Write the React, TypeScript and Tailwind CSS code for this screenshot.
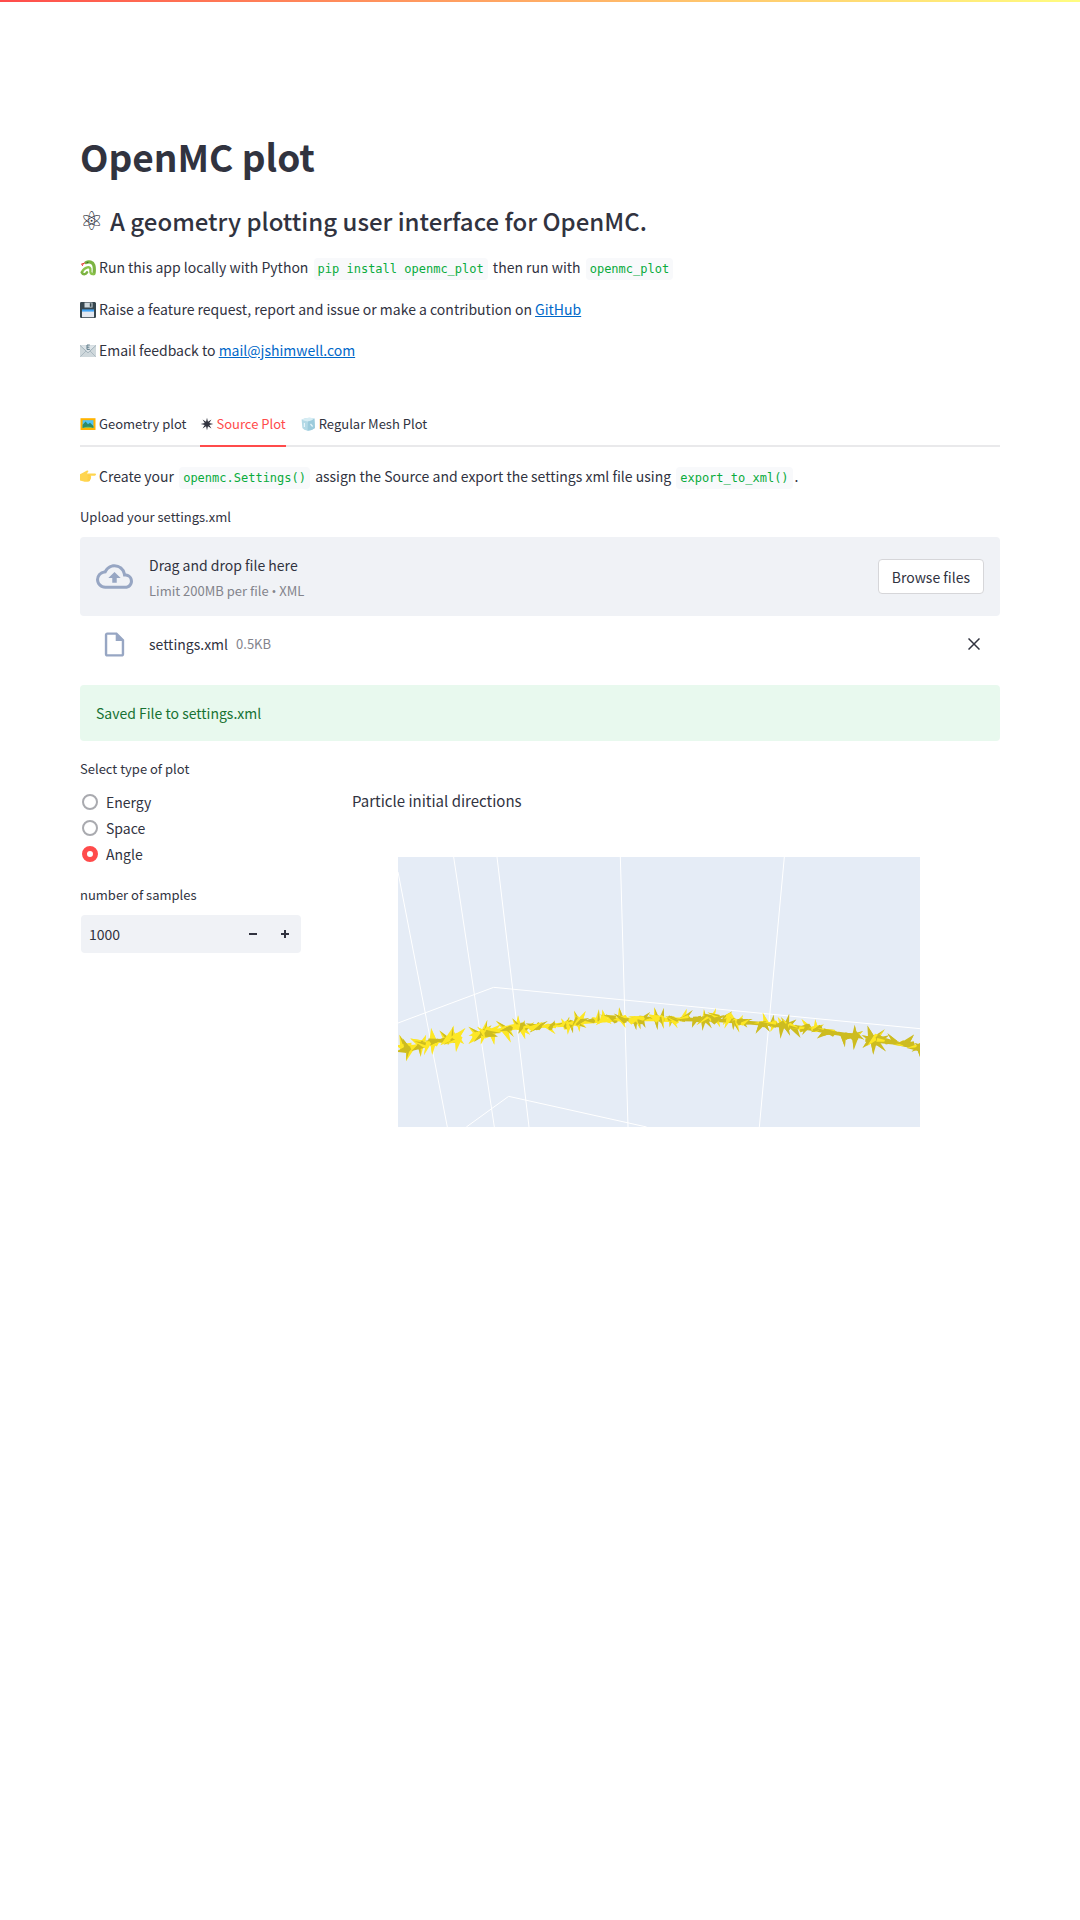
import { useRef, useState, type ReactNode } from "react";
import { MdOutlineCloudUpload, MdOutlineInsertDriveFile } from "react-icons/md";

const YELLOW = "#fde725";
const SHADE = "#cdbc20";

type Cone = [tipX: number, tipY: number, baseX: number, baseY: number, half: number, dark?: number];

const leftCones: Cone[] = [
  [60, 590, 72, 625, 9], [54, 618, 90, 626, 14], [54, 634, 84, 628, 9, 1], [80, 658, 92, 620, 10],
  [96, 598, 124, 612, 9], [70, 600, 84, 632, 8, 1], [122, 644, 122, 612, 8], [136, 590, 124, 618, 8],
  [100, 630, 132, 612, 9, 1], [108, 606, 142, 618, 8], [154, 570, 160, 610, 10], [157, 638, 160, 602, 8],
  [140, 604, 172, 608, 9], [184, 598, 148, 606, 8, 1], [134, 640, 146, 608, 6], [182, 576, 202, 602, 8],
  [168, 602, 206, 602, 9, 1], [220, 562, 204, 600, 8], [218, 566, 222, 604, 7, 1], [252, 568, 220, 600, 10],
  [229, 630, 236, 590, 9], [196, 612, 226, 598, 7], [248, 608, 224, 586, 8], [186, 612, 206, 596, 7],
  [270, 564, 296, 586, 8], [270, 608, 296, 584, 9], [272, 586, 310, 582, 9], [320, 546, 308, 586, 8],
  [286, 602, 318, 574, 7, 1], [304, 608, 314, 574, 8], [330, 560, 306, 582, 8, 1], [342, 608, 336, 572, 9],
  [358, 556, 326, 580, 8], [358, 578, 318, 570, 9], [296, 564, 322, 588, 8], [348, 588, 318, 580, 8, 1],
  [352, 546, 380, 570, 7], [390, 602, 372, 564, 9], [404, 554, 374, 568, 7], [398, 586, 380, 562, 6],
  [364, 572, 394, 564, 6, 1], [414, 532, 414, 566, 8], [400, 540, 414, 562, 7], [392, 556, 426, 562, 7],
  [434, 592, 424, 560, 8], [432, 546, 422, 564, 6], [446, 580, 420, 558, 8], [418, 576, 430, 552, 7, 1],
  [458, 550, 434, 566, 6], [436, 562, 472, 562, 7], [442, 552, 480, 562, 7, 1], [498, 546, 466, 564, 6, 1],
  [454, 574, 480, 554, 7, 1], [484, 548, 452, 566, 6], [500, 560, 526, 556, 7], [522, 578, 500, 556, 6],
  [522, 546, 510, 566, 5, 1], [530, 554, 558, 554, 7], [536, 560, 566, 550, 8], [546, 540, 560, 564, 7],
  [566, 536, 558, 562, 6, 1], [564, 578, 568, 546, 7], [578, 574, 572, 544, 6, 1], [584, 518, 596, 552, 8],
  [614, 518, 596, 548, 8], [598, 570, 596, 540, 7], [614, 560, 590, 544, 8], [562, 550, 596, 550, 8],
  [622, 536, 588, 548, 7, 1], [576, 562, 594, 534, 6], [620, 542, 642, 542, 6, 1], [640, 534, 660, 544, 6],
  [656, 514, 652, 544, 6], [668, 514, 674, 542, 7], [652, 552, 674, 534, 6], [664, 526, 706, 536, 7],
  [690, 548, 666, 532, 7], [682, 526, 708, 544, 6, 1], [718, 508, 722, 540, 8], [734, 558, 722, 532, 7],
  [704, 540, 738, 534, 7], [706, 524, 736, 544, 6, 1], [732, 538, 766, 542, 8, 1], [768, 564, 764, 534, 7, 1],
  [780, 562, 772, 534, 7, 1], [784, 530, 750, 544, 8], [806, 520, 778, 546, 7, 1], [794, 558, 782, 532, 7, 1],
  [812, 532, 778, 536, 7, 1], [750, 530, 790, 536, 5], [812, 536, 832, 536, 5],
];

const rightCones: Cone[] = [
  [14, 508, 20, 540, 7], [22, 564, 18, 528, 7, 1], [40, 510, 34, 544, 7, 1], [40, 560, 34, 530, 6],
  [0, 526, 24, 538, 9], [46, 544, 74, 538, 7], [60, 556, 64, 532, 6, 1], [80, 560, 64, 534, 6],
  [90, 540, 56, 534, 6, 1], [50, 530, 82, 546, 5], [108, 512, 98, 540, 7], [124, 514, 98, 540, 6, 1],
  [84, 538, 116, 534, 7, 1], [128, 558, 138, 534, 7, 1], [118, 540, 152, 538, 8, 1], [162, 514, 164, 546, 7],
  [158, 566, 162, 532, 7, 1], [182, 560, 164, 534, 6, 1], [144, 552, 172, 528, 6], [196, 510, 184, 540, 6],
  [166, 524, 194, 534, 6, 1], [178, 520, 206, 532, 6], [208, 556, 198, 532, 6], [218, 528, 188, 544, 8, 1],
  [242, 518, 222, 536, 6, 1], [222, 550, 238, 528, 7], [258, 544, 238, 524, 6], [210, 544, 242, 540, 7, 1],
  [226, 560, 238, 534, 6], [250, 564, 252, 538, 6, 1], [266, 572, 254, 540, 6], [276, 530, 262, 552, 6],
  [302, 538, 264, 546, 7, 1], [308, 550, 272, 546, 7, 1], [288, 558, 272, 540, 6, 1], [294, 540, 276, 552, 4],
  [316, 550, 344, 552, 8, 1], [320, 576, 336, 550, 7, 1], [340, 524, 350, 554, 7], [356, 570, 342, 548, 6, 1],
  [370, 530, 366, 558, 7, 1], [364, 570, 376, 546, 7], [344, 548, 378, 554, 7, 1], [386, 536, 398, 560, 7],
  [392, 590, 396, 552, 8, 1], [416, 528, 408, 560, 7, 1], [418, 582, 404, 550, 7, 1], [370, 560, 402, 552, 8, 1],
  [396, 536, 416, 566, 7, 1], [434, 542, 406, 562, 8, 1], [448, 588, 430, 560, 8, 1], [450, 566, 418, 556, 6],
  [458, 542, 474, 562, 6], [446, 562, 478, 560, 7, 1], [484, 564, 450, 568, 7], [460, 580, 474, 556, 6, 1],
  [496, 544, 498, 572, 7], [516, 556, 488, 568, 7], [488, 574, 512, 562, 6, 1], [506, 592, 528, 576, 7, 1],
  [508, 566, 552, 580, 8, 1], [564, 578, 522, 576, 8, 1], [566, 582, 592, 590, 8, 1], [584, 616, 580, 584, 7, 1],
  [590, 580, 620, 592, 7, 1], [614, 560, 614, 598, 8, 1], [634, 576, 606, 592, 8, 1], [612, 624, 616, 588, 8, 1],
  [592, 596, 618, 584, 7, 1], [638, 596, 614, 580, 6, 1], [654, 562, 666, 600, 9, 1], [670, 638, 672, 592, 10, 1],
  [700, 572, 670, 602, 8, 1], [640, 588, 676, 602, 8, 1], [642, 620, 668, 596, 8, 1], [712, 588, 674, 606, 9, 1],
  [704, 630, 676, 602, 7, 1], [656, 614, 682, 588, 7], [720, 604, 682, 594, 9, 1], [716, 584, 736, 608, 6, 1],
  [750, 608, 708, 604, 7, 1], [738, 614, 762, 610, 7], [788, 588, 764, 614, 9, 1], [752, 612, 790, 616, 9, 1],
  [776, 624, 812, 622, 10, 1], [790, 632, 816, 616, 7, 1], [812, 652, 808, 620, 7, 1], [798, 612, 826, 628, 8, 1],
];

function Cones({ items }: { items: Cone[] }) {
  return (
    <>
      {items.map(([tx, ty, bx, by, half, dark], i) => {
        const len = Math.hypot(bx - tx, by - ty) || 1;
        const ux = (bx - tx) / len;
        const uy = (by - ty) / len;
        const h = half * 1.3;
        const a = `${bx - uy * h},${by + ux * h}`;
        const b = `${bx + uy * h},${by - ux * h}`;
        const tip = `${tx - ux * 6},${ty - uy * 6}`;
        const back = `${bx + ux * 5},${by + uy * 5}`;
        const main = dark ? SHADE : YELLOW;
        const side = dark ? (i % 6 ? SHADE : YELLOW) : i % 3 ? YELLOW : SHADE;
        return (
          <g key={i}>
            <polygon points={`${tip} ${a} ${back} ${b}`} fill={main} />
            <polygon points={`${tip} ${bx},${by} ${b}`} fill={side} />
          </g>
        );
      })}
    </>
  );
}

function DirectionsPlot() {
  return (
    <svg
      viewBox="54 51 1566 810"
      preserveAspectRatio="xMidYMid slice"
      className="h-[270px] w-full bg-[#e5ecf6]"
      role="img"
      aria-label="Particle initial directions"
    >
      <g fill="none" stroke="#ffffff" strokeWidth="3" strokeLinejoin="round">
        <path d="M54 96L202 861M221 51L343 861M351 51L447 861M721 51L744 861M1213 51L1138 861" />
        <path d="M54 549L341 442L1620 566M259 861L386 769L800 861" />
      </g>
      <g fill="none" strokeWidth="11">
        <path stroke={YELLOW} d="M60 624L100 620L160 606L240 594M276 586L350 572L430 560L500 558L600 547L720 538L820 538L900 538" />
        <path stroke={SHADE} d="M900 538L1000 540L1080 546L1180 554L1290 566L1370 580L1440 590M1456 600L1540 608L1620 624" />
      </g>
      <Cones items={leftCones} />
      <g transform="translate(810 0)">
        <Cones items={rightCones} />
      </g>
    </svg>
  );
}

function Code({ children }: { children: ReactNode }) {
  return (
    <code className="mx-0.5 rounded bg-[#f8f9fb] px-1 py-1 font-['DejaVu_Sans_Mono',monospace] text-xs text-[#09ab3b]">
      {children}
    </code>
  );
}

const glyph = "mr-[3px] inline-block size-4 shrink-0 align-[-3px]";

function SnakeIcon() {
  return (
    <svg viewBox="0 0 16 16" className={glyph} aria-hidden="true" fill="none" strokeLinecap="round">
      <path d="M6 2.600C9 1 12.800 2 13.800 5.200C14.600 8 14.400 11 14 13.600" stroke="#7cb342" strokeWidth="3.200" />
      <path d="M13.600 14C11 14.600 10 12.600 10.400 10.200C10.800 7.600 9.200 7 7.400 7.400C5.400 8 3 9.600 2 12" stroke="#8bc34a" strokeWidth="2.400" />
      <path d="M1.800 12.500C3 15 5.600 14.800 7 12.400" stroke="#7cb342" strokeWidth="2.600" />
      <path d="M4.800 3L1.400 4.200M3.400 3.400L2.400 5.600" stroke="#e53935" strokeWidth="1" />
      <path d="M7 2.400H8" stroke="#33691e" strokeWidth="1" />
    </svg>
  );
}

function FloppyIcon() {
  return (
    <svg viewBox="0 0 16 16" className={glyph} aria-hidden="true">
      <path d="M1.200 0H15L16 1V14.800Q16 16 14.800 16H1.200Q0 16 0 14.800V1.200Q0 0 1.200 0Z" fill="#37474f" />
      <path d="M4.500 0.600H12.500V5.500H4.500Z" fill="#cfd8dc" />
      <path d="M9.800 1.200H11.500V4.800H9.800Z" fill="#37474f" />
      <path d="M2 8H14V15.200H2Z" fill="#e3e8f0" />
      <path d="M2 7.400H14V9.600H2Z" fill="#42a5f5" />
    </svg>
  );
}

function MailIcon() {
  return (
    <svg viewBox="0 0 16 16" className={glyph} aria-hidden="true">
      <path d="M0 2H16V14H0Z" fill="#cfd8dc" />
      <path d="M0.400 13.600L6 8M15.600 13.600L10 8" stroke="#a3b3bb" strokeWidth="0.800" fill="none" />
      <path d="M0 2.400L8 9.800L16 2.400" stroke="#a3b3bb" strokeWidth="1" fill="#dde4e8" />
      <path d="M9.800 2H7V6.400H9.800M7 4.200H9.400" stroke="#607d8b" strokeWidth="1" fill="none" />
    </svg>
  );
}

function PointIcon() {
  return (
    <svg viewBox="0 0 16 16" className={glyph} aria-hidden="true">
      <path
        d="M0 5.200L3.400 3.600L7 1.400Q8.800 1.200 8.200 2.800L6.800 4.400H15Q16.200 4.600 16 5.600Q15.800 6.600 14.800 6.700H10.600Q11.600 7.600 10.800 8.800Q11.200 10 10.200 10.800Q10.200 12 9 12.400Q5.600 13.200 3 12.200L0 11.400Z"
        fill="#ffd54f"
      />
      <path d="M10.400 6.800H7.600M10.600 8.900H7.800M10 10.900H7.600" stroke="#fbc02d" strokeWidth="0.500" />
    </svg>
  );
}

function PictureIcon() {
  return (
    <svg viewBox="0 0 16 16" className={glyph} aria-hidden="true">
      <path d="M0.500 2.200H15.500V14H0.500Z" fill="#ffb300" />
      <path d="M2.600 4.200H13.400V12H2.600Z" fill="#4fc3f7" />
      <path d="M2.600 12V8.800L5.600 5.600L8 8.200L10 6.800L13.400 10V12Z" fill="#2e8b6b" />
      <path d="M2.600 12Q8 9.600 13.400 12Z" fill="#8bc34a" />
    </svg>
  );
}

function StarIcon() {
  return (
    <svg viewBox="0 0 16 16" className="mr-0.5 size-[14px] shrink-0" aria-hidden="true">
      <path
        d="M8 0.800L9.100 5.400L13.100 2.900L10.600 6.900L15.200 8L10.600 9.100L13.100 13.100L9.100 10.600L8 15.200L6.900 10.600L2.900 13.100L5.400 9.100L0.800 8L5.400 6.900L2.900 2.900L6.900 5.400Z"
        fill="#31333f"
      />
    </svg>
  );
}

function IceIcon() {
  return (
    <svg viewBox="0 0 16 16" className={glyph} aria-hidden="true">
      <path d="M1.600 3.400Q8 0.800 14.400 2.600L15 12Q12 14.600 7.600 14.800Q3.600 14 2.400 12Z" fill="#b3d9e6" />
      <path d="M1.600 3.400Q8 0.800 14.400 2.600Q12 5 8 5.400Q4 5 1.600 3.400Z" fill="#d7edf4" />
      <path d="M8 5.400Q12 5 14.400 2.600L15 12Q12 14.600 7.600 14.800Z" fill="#9ccbdc" />
      <path d="M4.400 7V11M10.500 8L12.600 10.500" stroke="#e6f5fa" strokeWidth="1.200" />
    </svg>
  );
}

const tabs = [
  { icon: <PictureIcon />, label: "Geometry plot" },
  { icon: <StarIcon />, label: "Source Plot" },
  { icon: <IceIcon />, label: "Regular Mesh Plot" },
];

export default function App() {
  const [tab, setTab] = useState("Source Plot");
  const [kind, setKind] = useState("Angle");
  const [samples, setSamples] = useState(1000);
  const fileInput = useRef<HTMLInputElement>(null);

  return (
    <div className="min-h-screen bg-white font-['Noto_Sans_CJK_SC',sans-serif] text-[14px] leading-6 text-[#31333f]">
      <div className="h-0.5 bg-linear-to-r from-[#ff4b4b] to-[#fffd80]" />
      <main className="px-20 pt-32">
        <h1 className="text-[37px] leading-[52px] font-bold">OpenMC plot</h1>
        <h3 className="mt-[23px] flex text-2xl leading-8 font-medium">
          <span className="w-[30px] font-['DejaVu_Sans',sans-serif] text-[26px] font-normal">⚛</span>
          A geometry plotting user interface for OpenMC.
        </h3>
        <p className="mt-[18px]">
          <SnakeIcon />
          Run this app locally with Python <Code>pip install openmc_plot</Code> then run with{" "}
          <Code>openmc_plot</Code>
        </p>
        <p className="mt-[18px]">
          <FloppyIcon />
          Raise a feature request, report and issue or make a contribution on{" "}
          <a href="#github" className="text-[#0068c9] underline">GitHub</a>
        </p>
        <p className="mt-[17px]">
          <MailIcon />
          Email feedback to{" "}
          <a href="mailto:mail@jshimwell.com" className="text-[#0068c9] underline">mail@jshimwell.com</a>
        </p>

        <div role="tablist" className="mt-[41px] flex h-[44px] gap-3.5 border-b-2 border-[#e9e9eb]">
          {tabs.map((t) => (
            <button
              key={t.label}
              role="tab"
              aria-selected={tab === t.label}
              onClick={() => setTab(t.label)}
              className={`-mb-0.5 flex items-center border-b-2 text-[13px] ${
                tab === t.label ? "border-[#ff4b4b] text-[#ff4b4b]" : "border-transparent"
              }`}
            >
              {t.icon}
              {t.label}
            </button>
          ))}
        </div>

        <p className="mt-[17px]">
          <PointIcon />
          Create your <Code>openmc.Settings()</Code> assign the Source and export the settings xml file using{" "}
          <Code>export_to_xml()</Code>.
        </p>

        <label htmlFor="settings-file" className="mt-[17px] mb-2 block text-[13px] leading-6">
          Upload your settings.xml
        </label>
        <section className="flex h-[79px] items-center rounded bg-[#f0f2f6] px-4">
          <MdOutlineCloudUpload className="mr-4 size-[37px] text-[#97a6c3]" />
          <div className="flex-1 pt-0.5">
            <p>Drag and drop file here</p>
            <small className="mt-0.5 block text-[13px] text-[#83848c]">
              Limit 200MB per file <span className="font-['Open_Sans',sans-serif]">•</span> XML
            </small>
          </div>
          <input id="settings-file" ref={fileInput} type="file" accept=".xml" className="sr-only" />
          <button
            onClick={() => fileInput.current?.click()}
            className="h-[35px] rounded border border-[#d6d6d9] bg-white px-[13px]"
          >
            Browse files
          </button>
        </section>
        <div className="flex h-[56px] items-center px-4">
          <span className="mr-4 flex w-[37px] justify-center">
            <MdOutlineInsertDriveFile className="size-[29px] text-[#97a6c3]" />
          </span>
          <span className="mr-2">settings.xml</span>
          <small className="flex-1 text-[13px] text-[#83848c]">0.5KB</small>
          <button aria-label="Remove file" className="p-1">
            <svg viewBox="0 0 12 12" className="size-3" stroke="#31333f" strokeWidth="1.500">
              <path d="M0.500 0.500L11.500 11.500M11.500 0.500L0.500 11.500" />
            </svg>
          </button>
        </div>

        <div role="alert" className="mt-[13px] rounded bg-[#e8f9ee] p-4 text-[#177233]">
          Saved File to settings.xml
        </div>

        <div className="mt-4 flex gap-4">
          <div className="w-[calc(25%-8px)] shrink-0">
            <fieldset>
              <legend className="text-[13px] leading-6">Select type of plot</legend>
              <div className="mt-2">
                {["Energy", "Space", "Angle"].map((k) => (
                  <label key={k} className="flex h-[26px] items-center gap-2 pl-0.5">
                    <input
                      type="radio"
                      name="kind"
                      checked={kind === k}
                      onChange={() => setKind(k)}
                      className="size-4 appearance-none rounded-full border-2 border-[#a9aaaf] bg-white checked:border-[5px] checked:border-[#ff4b4b]"
                    />
                    {k}
                  </label>
                ))}
              </div>
            </fieldset>
            <label htmlFor="samples" className="mt-4 mb-2 block text-[13px] leading-6">
              number of samples
            </label>
            <div className="mx-px flex h-[38px] items-center rounded bg-[#f0f2f6]">
              <input
                id="samples"
                inputMode="numeric"
                value={samples}
                onChange={(e) => setSamples(Number(e.target.value) || 0)}
                className="min-w-0 flex-1 bg-transparent pl-2"
              />
              <button aria-label="Decrease" onClick={() => setSamples(samples - 1)} className="flex h-full w-8 items-center justify-center">
                <svg viewBox="0 0 8 8" className="size-2" stroke="#31333f" strokeWidth="2"><path d="M0 4H8" /></svg>
              </button>
              <button aria-label="Increase" onClick={() => setSamples(samples + 1)} className="flex h-full w-8 items-center justify-center">
                <svg viewBox="0 0 8 8" className="size-2" stroke="#31333f" strokeWidth="2"><path d="M0 4H8M4 0V8" /></svg>
              </button>
            </div>
          </div>
          <figure className="min-w-0 flex-1 pt-8 pb-20">
            <figcaption className="pl-[34px] text-[15px]">Particle initial directions</figcaption>
            <div className="mt-11 px-20">
              <DirectionsPlot />
            </div>
          </figure>
        </div>
      </main>
    </div>
  );
}
